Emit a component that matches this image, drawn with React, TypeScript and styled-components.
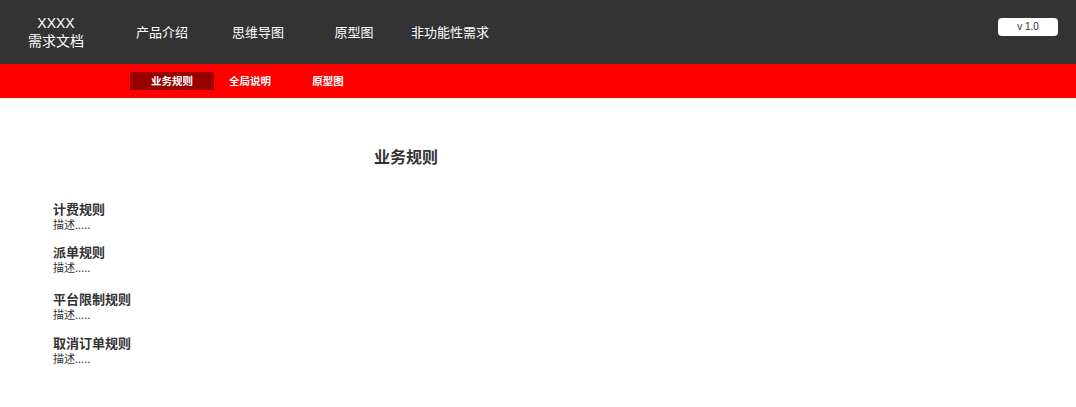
import styled, { createGlobalStyle } from "styled-components";

const GlobalStyle = createGlobalStyle`
  body {
    margin: 0;
    background: #fff;
    font-family: "Noto Sans CJK SC", "Noto Sans", sans-serif;
    color: #333;
  }
`;

const Header = styled.header`
  display: flex;
  align-items: center;
  height: 64px;
  background-color: #333;
  color: #fff;
`;

const Logo = styled.div`
  width: 112px;
  display: flex;
  flex-direction: column;
  align-items: center;
  font-family: "Liberation Sans", "Noto Sans CJK SC", sans-serif;
  font-size: 14px;
  line-height: 18px;
`;

const MainNav = styled.nav`
  display: flex;
  flex-grow: 1;
  padding-left: 2px;
`;

const NavItem = styled.div`
  width: 96px;
  text-align: center;
  font-size: 13px;
  line-height: 18px;
`;

const Version = styled.div`
  align-self: flex-start;
  margin: 18px 18px 0 0;
  width: 60px;
  height: 18px;
  box-sizing: border-box;
  background-color: #fff;
  border-radius: 4px;
  color: #333;
  font-family: "Liberation Sans", Arial, sans-serif;
  font-size: 10px;
  line-height: 18px;
  text-align: center;
`;

const SubBar = styled.div`
  display: flex;
  align-items: center;
  height: 34px;
  padding-left: 133px;
  background-color: #ff0000;
`;

const SubItem = styled.div<{ $active?: boolean }>`
  width: ${(p) => (p.$active ? "84px" : "78px")};
  margin: ${(p) => (p.$active ? "0 -3px" : "0")};
  height: 18px;
  background-color: ${(p) => (p.$active ? "#990000" : "transparent")};
  color: #fff;
  font-size: 10.5px;
  font-weight: 700;
  line-height: 18px;
  text-align: center;
`;

const Main = styled.main`
  padding: 47px 53px 0;
`;

const Article = styled.article`
  width: 706px;
  display: flex;
  flex-direction: column;
`;

const PageTitle = styled.h1`
  margin: 0 0 34px;
  font-size: 16px;
  line-height: 22px;
  font-weight: 700;
  text-align: center;
`;

const Rule = styled.section<{ $space: number }>`
  display: flex;
  flex-direction: column;
  margin-bottom: ${(p) => p.$space}px;
`;

const RuleName = styled.div`
  font-size: 13px;
  line-height: 16px;
  font-weight: 700;
`;

const RuleDesc = styled.div`
  font-size: 11px;
  line-height: 15px;
`;

const rules = [
  { name: "计费规则", space: 12 },
  { name: "派单规则", space: 16 },
  { name: "平台限制规则", space: 13 },
  { name: "取消订单规则", space: 0 },
];

export default function App() {
  return (
    <>
      <GlobalStyle />
      <Header>
        <Logo>
          <span>XXXX</span>
          <span>需求文档</span>
        </Logo>
        <MainNav>
          <NavItem>产品介绍</NavItem>
          <NavItem>思维导图</NavItem>
          <NavItem>原型图</NavItem>
          <NavItem>非功能性需求</NavItem>
        </MainNav>
        <Version>v 1.0</Version>
      </Header>
      <SubBar>
        <SubItem $active>业务规则</SubItem>
        <SubItem>全局说明</SubItem>
        <SubItem>原型图</SubItem>
      </SubBar>
      <Main>
        <Article>
          <PageTitle>业务规则</PageTitle>
          {rules.map((r) => (
            <Rule key={r.name} $space={r.space}>
              <RuleName>{r.name}</RuleName>
              <RuleDesc>描述.....</RuleDesc>
            </Rule>
          ))}
        </Article>
      </Main>
    </>
  );
}
